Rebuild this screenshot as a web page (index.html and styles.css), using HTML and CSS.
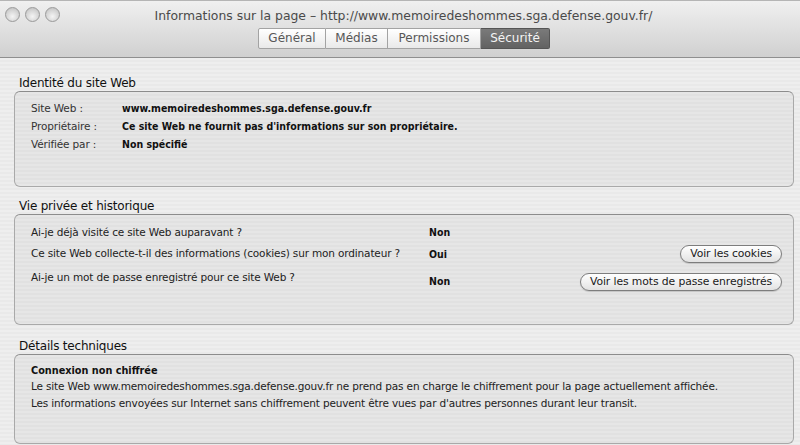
FILE: index.html
```html
<!DOCTYPE html>
<html lang="fr">
<head>
<meta charset="utf-8">
<title>Informations sur la page</title>
<link rel="stylesheet" href="styles.css">
</head>
<body>
<div class="window">
  <header class="toolbar">
    <div class="titlerow">
      <div class="lights">
        <span class="light"></span><span class="light"></span><span class="light"></span>
      </div>
      <div class="title">Informations sur la page – http://www.memoiredeshommes.sga.defense.gouv.fr/</div>
    </div>
    <nav class="tabs">
      <span class="tab t-gen">Général</span><span class="tab t-med">Médias</span><span class="tab t-perm">Permissions</span><span class="tab t-sec active">Sécurité</span>
    </nav>
  </header>
  <main class="content">
    <section class="group g-id">
      <h2 class="heading">Identité du site Web</h2>
      <div class="box box-id">
        <div class="idrow"><span class="lbl">Site Web :</span><span class="val">www.memoiredeshommes.sga.defense.gouv.fr</span></div>
        <div class="idrow"><span class="lbl">Propriétaire :</span><span class="val">Ce site Web ne fournit pas d'informations sur son propriétaire.</span></div>
        <div class="idrow"><span class="lbl">Vérifiée par :</span><span class="val">Non spécifié</span></div>
      </div>
    </section>
    <section class="group g-priv">
      <h2 class="heading">Vie privée et historique</h2>
      <div class="box box-priv">
        <div class="prow r1"><span class="q">Ai-je déjà visité ce site Web auparavant ?</span><span class="a">Non</span><span class="act"></span></div>
        <div class="prow r2"><span class="q">Ce site Web collecte-t-il des informations (cookies) sur mon ordinateur ?</span><span class="a">Oui</span><span class="act"><button class="btn">Voir les cookies</button></span></div>
        <div class="prow r3"><span class="q">Ai-je un mot de passe enregistré pour ce site Web ?</span><span class="a">Non</span><span class="act"><button class="btn">Voir les mots de passe enregistrés</button></span></div>
      </div>
    </section>
    <section class="group g-tech">
      <h2 class="heading">Détails techniques</h2>
      <div class="box box-tech">
        <p class="tt">Connexion non chiffrée</p>
        <p class="tl">Le site Web www.memoiredeshommes.sga.defense.gouv.fr ne prend pas en charge le chiffrement pour la page actuellement affichée.</p>
        <p class="tl tl2">Les informations envoyées sur Internet sans chiffrement peuvent être vues par d'autres personnes durant leur transit.</p>
      </div>
    </section>
  </main>
</div>
</body>
</html>
```

FILE: styles.css
```css
* { box-sizing: border-box; }
html, body { margin: 0; padding: 0; }
body {
  width: 800px;
  height: 445px;
  overflow: hidden;
  font-family: "DejaVu Sans", "Liberation Sans", sans-serif;
  font-size: 10.5px;
  letter-spacing: -0.15px;
  color: #222;
  background: #ececec;
}
.window { width: 800px; height: 445px; display: flex; flex-direction: column; }

.toolbar {
  height: 58px;
  flex: none;
  background: linear-gradient(to bottom, #f0f0f0 0%, #e3e3e3 40%, #d0d0d0 100%);
  border-top: 1px solid #b5b5b5;
  border-bottom: 1px solid #8f8f8f;
  display: flex;
  flex-direction: column;
}
.titlerow { display: flex; align-items: center; height: 26px; padding-left: 5px; }
.lights { display: flex; gap: 5px; flex: none; }
.light {
  width: 15px; height: 15px; border-radius: 50%;
  background: radial-gradient(circle at 50% 65%, #f4f4f4 0%, #d6d6d6 55%, #b9b9b9 100%);
  border: 1px solid #9a9a9a;
}
.title {
  flex: 1;
  text-align: center;
  font-size: 12.4px;
  letter-spacing: 0;
  color: #4a4a4a;
  padding-right: 53px;
  padding-top: 2px;
}
.tabs { display: flex; justify-content: center; margin-top: 1px; padding-left: 8px; }
.tab {
  height: 21px;
  line-height: 19px;
  font-size: 12px;
  letter-spacing: 0;
  color: #575757;
  text-align: center;
  background: linear-gradient(to bottom, #ffffff, #e9e9e9);
  border: 1px solid #a3a3a3;
  border-left: none;
}
.t-gen { width: 68px; border-left: 1px solid #a3a3a3; border-radius: 2px 0 0 2px; }
.t-med { width: 62px; }
.t-perm { width: 93px; }
.t-sec { width: 69px; border-radius: 0 2px 2px 0; }
.tab.active {
  background: linear-gradient(to bottom, #7a7a7a, #626262);
  color: #f4f4f4;
  border-color: #555;
}

.content {
  flex: 1;
  padding: 18px 6px 0 14px;
  background: repeating-linear-gradient(to bottom, #eeeeee 0, #eeeeee 2px, #e9e9e9 2px, #e9e9e9 4px);
  display: flex;
  flex-direction: column;
}
.heading {
  margin: 0 0 1px 5px;
  font-size: 12px;
  letter-spacing: -0.2px;
  font-weight: normal;
  color: #111;
  line-height: 14px;
}
.box {
  border: 1px solid #a9a9a9;
  border-top-color: #8c8c8c;
  border-radius: 6px;
  background: repeating-linear-gradient(to bottom, #e6e6e6 0, #e6e6e6 2px, #e1e1e1 2px, #e1e1e1 4px);
  padding-left: 16px;
}
.box-id { height: 96px; padding-top: 7px; }
.g-priv { margin-top: 12px; }
.box-priv { height: 111px; padding-top: 8px; padding-right: 11px; }
.g-tech { margin-top: 14px; }
.box-tech { height: 90px; padding-top: 8px; }

.idrow { display: flex; height: 18px; line-height: 18px; }
.lbl { width: 91px; flex: none; color: #333; }
.val, .a, .tt {
  font-family: "DejaVu Sans Condensed", "DejaVu Sans", sans-serif;
  font-stretch: condensed;
  font-weight: bold;
  letter-spacing: 0;
  color: #111;
}

.prow { display: flex; align-items: flex-start; line-height: 18px; }
.q { width: 398px; flex: none; color: #222; }
.a { width: 80px; flex: none; }
.act { flex: 1; display: flex; justify-content: flex-end; }
.r1 { height: 21px; }
.r2 { height: 24px; }
.r2 .a { margin-top: 1px; }
.r2 .act { margin-top: 1px; }
.r3 .a { margin-top: 4px; }
.r3 .act { margin-top: 5px; }
.btn {
  font-family: inherit;
  font-size: 10.8px;
  letter-spacing: -0.1px;
  color: #1a1a1a;
  height: 18px;
  line-height: 16px;
  padding: 0 9px;
  border-radius: 9px;
  border: 1px solid #7d7d7d;
  background: linear-gradient(to bottom, #ffffff 0%, #f1f1f1 50%, #e2e2e2 100%);
  box-shadow: 0 1px 1px rgba(0,0,0,0.15);
}

.tt { margin: 0; line-height: 16px; font-size: 10.8px; }
.tl { margin: 0; line-height: 15px; color: #222; }
.tl2 { margin-top: 2px; }
```
